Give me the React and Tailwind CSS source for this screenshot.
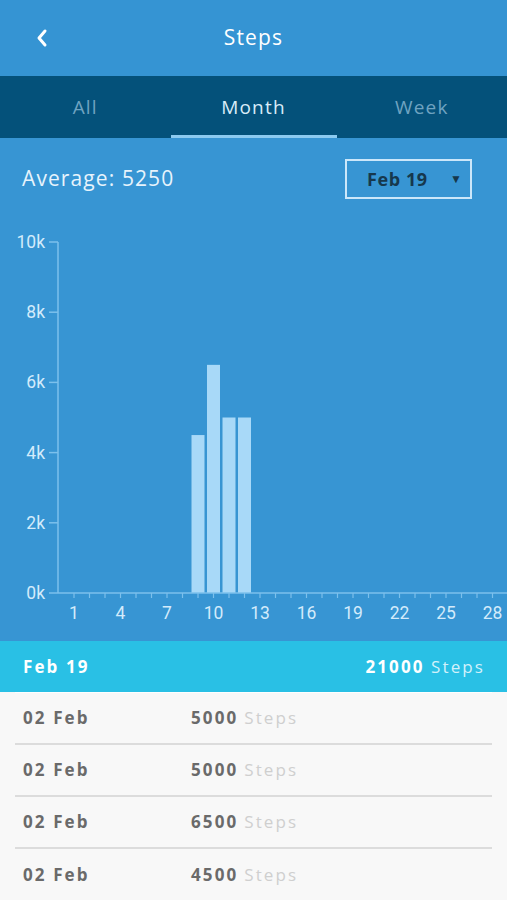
import React from "react";

const days = Array.from({ length: 28 }, (_, i) => i + 1);
const bars = { 9: 4500, 10: 6500, 11: 5000, 12: 5000 };
const X0 = 74;
const DX = 15.5;
const Y0 = 394; // 0k
const PER_K = 35.1;

function Chart() {
  const labels = [0, 2, 4, 6, 8, 10];
  return (
    <svg width="507" height="442" className="block">
      <line x1="58" y1="43" x2="58" y2={Y0} stroke="#7cc0ec" strokeWidth="1.5" />
      {labels.map((k) => {
        const y = Y0 - k * PER_K;
        return (
          <g key={k}>
            <line x1="49" y1={y} x2="58" y2={y} stroke="#7cc0ec" strokeWidth="1.5" />
            <text
              x="45"
              y={y + 6}
              textAnchor="end"
              fontSize="17.5"
              fill="#d3ebfb"
              fontFamily="Roboto, sans-serif"
            >
              {k}k
            </text>
          </g>
        );
      })}
      {Object.entries(bars).map(([d, v]) => {
        const cx = X0 + (Number(d) - 1) * DX;
        const h = (v / 1000) * PER_K;
        return <rect key={d} x={cx - 6.5} y={Y0 - h} width="13" height={h} fill="#a8d9f8" />;
      })}
      <line x1="58" y1={Y0} x2="507" y2={Y0} stroke="#7cc0ec" strokeWidth="1.5" />
      {days.map((d) => {
        const x = X0 + (d - 1) * DX;
        return (
          <g key={d}>
            <line x1={x} y1={Y0} x2={x} y2={Y0 + 5} stroke="#7cc0ec" strokeWidth="1.2" />
            {(d - 1) % 3 === 0 && (
              <text
                x={x}
                y={Y0 + 26}
                textAnchor="middle"
                fontSize="17.5"
                fill="#d3ebfb"
                fontFamily="Roboto, sans-serif"
              >
                {d}
              </text>
            )}
          </g>
        );
      })}
    </svg>
  );
}

const rows = [
  ["02 Feb", "5000"],
  ["02 Feb", "5000"],
  ["02 Feb", "6500"],
  ["02 Feb", "4500"],
];

export default function App() {
  return (
    <div
      className="w-[507px] h-[900px] overflow-hidden bg-[#f8f8f8]"
      style={{ fontFamily: "'Open Sans', 'Noto Sans', sans-serif" }}
    >
      {/* header */}
      <div className="h-[76px] bg-[#3594d3] flex items-center">
        <div className="w-[84px] flex justify-center">
          <svg width="14" height="20" viewBox="0 0 14 20">
            <path d="M10 3 L4 10 L10 17" fill="none" stroke="white" strokeWidth="3" strokeLinecap="round" strokeLinejoin="round" />
          </svg>
        </div>
        <div className="flex-1 text-center text-white text-[21px] pr-[84px] tracking-[1.2px]">Steps</div>
      </div>
      {/* tabs */}
      <div className="h-[62px] bg-[#04517a] flex">
        <div className="flex-1 flex items-center justify-center text-[19px] tracking-[1.2px] text-[#6fa3c1]">All</div>
        <div className="w-[166px] flex items-center justify-center text-[19px] tracking-[1.2px] text-[#d8ecf8] border-b-[3px] border-[#8ccaf0] pt-[3px]">
          Month
        </div>
        <div className="flex-1 flex items-center justify-center text-[19px] tracking-[1.2px] text-[#6fa3c1]">Week</div>
      </div>
      {/* chart area */}
      <div className="h-[503px] bg-[#3795d3] flex flex-col">
        <div className="flex items-center justify-between pt-[21px] pl-[22px] pr-[35px]">
          <div className="text-[21px] tracking-[1.1px] text-[#e6f3fc]">Average: 5250</div>
          <div className="w-[127px] h-[40px] border-2 border-[#cbe7fa] flex items-center relative pl-[20px]">
            <span className="text-[18px] font-bold tracking-[0.6px] text-[#16384d]">Feb 19</span>
            <span className="absolute right-[8px] top-[9px] text-[12px] text-[#16384d]">▼</span>
          </div>
        </div>
        <Chart />
      </div>
      {/* summary */}
      <div className="h-[51px] bg-[#29c0e5] flex items-center justify-between pl-[23px] pr-[22px] text-[17px] tracking-[2.1px]">
        <span className="font-bold text-white">Feb 19</span>
        <span>
          <span className="font-bold text-white">21000</span>{" "}
          <span className="text-[#d2f1fb]">Steps</span>
        </span>
      </div>
      <div className="mx-[15px] h-[1px] bg-white" />
      <div className="flex flex-col">
        {rows.map(([d, v], i) => (
          <div
            key={i}
            className={`mx-[15px] h-[52px] flex items-center px-[8px] text-[17px] tracking-[2.1px] ${
              i < rows.length - 1 ? "border-b-2 border-[#dcdcdc]" : ""
            }`}
          >
            <span className="w-[168px] font-bold text-[#6a6a6a]">{d}</span>
            <span className="font-bold text-[#6a6a6a]">{v}</span>
            <span className="ml-[6px] text-[#cfcfcf]">Steps</span>
          </div>
        ))}
      </div>
    </div>
  );
}
